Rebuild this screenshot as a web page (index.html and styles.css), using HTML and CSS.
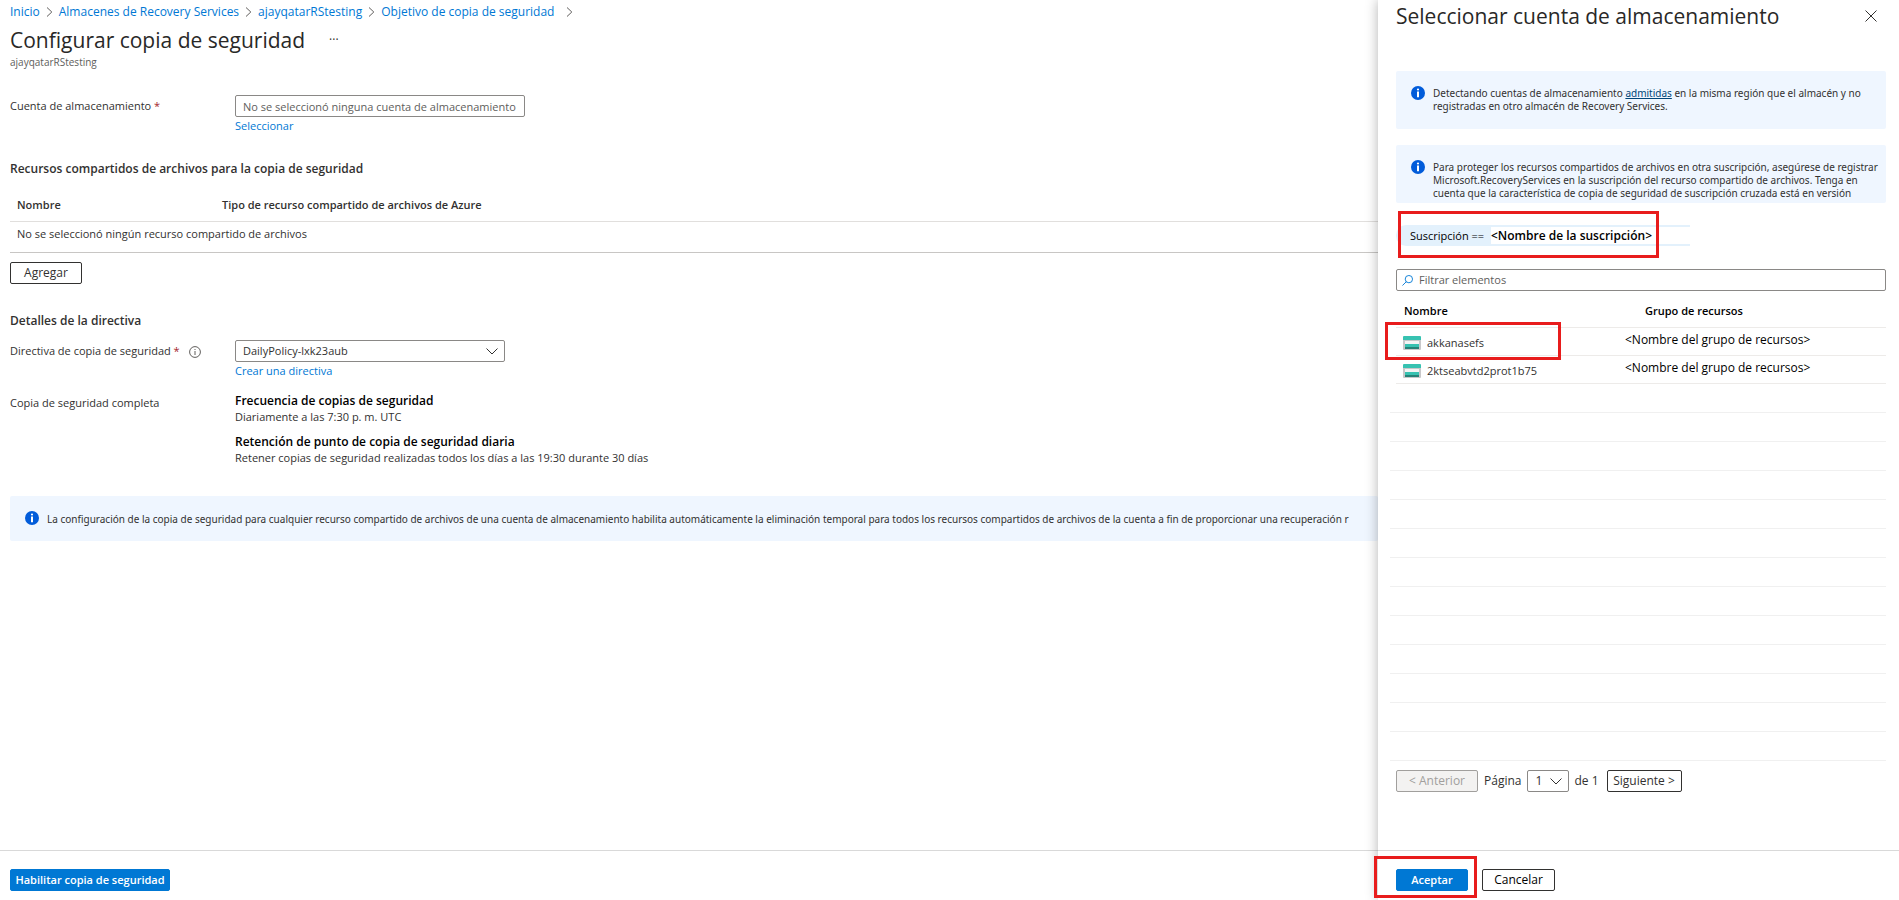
FILE: index.html
```
<!DOCTYPE html>
<html lang="es">
<head>
    <meta charset="UTF-8">
    <meta name="viewport" content="width=device-width, initial-scale=1.0">
    <title>Configurar copia de seguridad</title>
    <link rel="stylesheet" href="styles.css">
</head>
<body>

    <svg class="sprite" aria-hidden="true">
        <symbol id="chevron-right" viewBox="0 0 6 10">
            <path d="M.5.5 5.3 5 .5 9.5" fill="none" stroke="#605e5c"/>
        </symbol>
        <symbol id="chevron-down" viewBox="0 0 12 7">
            <path d="M.5.5 6 6 11.5.5" fill="none" stroke="#323130"/>
        </symbol>
        <symbol id="info" viewBox="0 0 14 14">
            <circle cx="7" cy="7" r="7" fill="#015cda"/>
            <circle cx="7" cy="3.5" r="1.1" fill="#fff"/>
            <path d="M6 5.6h2v5.6H6z" fill="#fff"/>
        </symbol>
        <symbol id="storage" viewBox="0 0 18 14">
            <path d="M0 4h18v9a1 1 0 0 1-1 1H1a1 1 0 0 1-1-1z" fill="#c8c8ca"/>
            <path d="M1 0h16a1 1 0 0 1 1 1v3H0V1a1 1 0 0 1 1-1z" fill="#37c2b1"/>
            <path d="M2 5h14v3H2z" fill="#f4f4f4"/>
            <path d="M2 8h14v3H2z" fill="#37c2b1"/>
            <path d="M2 11h14v2H2z" fill="#258277"/>
        </symbol>
    </svg>

    <div class="page">
        <main class="blade">
            <nav class="breadcrumb">
                <a href="#">Inicio</a>
                <svg class="sep"><use href="#chevron-right"/></svg>
                <a href="#">Almacenes de Recovery Services</a>
                <svg class="sep"><use href="#chevron-right"/></svg>
                <a href="#">ajayqatarRStesting</a>
                <svg class="sep"><use href="#chevron-right"/></svg>
                <a href="#">Objetivo de copia de seguridad</a>
                <svg class="sep last"><use href="#chevron-right"/></svg>
            </nav>

            <header class="title-row">
                <h1>Configurar copia de seguridad</h1>
                <button class="more" aria-label="Más">···</button>
            </header>
            <p class="subtitle">ajayqatarRStesting</p>

            <div class="field account">
                <label for="account">Cuenta de almacenamiento <span class="required">*</span></label>
                <div class="control">
                    <input type="text" id="account" class="box" placeholder="No se seleccionó ninguna cuenta de almacenamiento">
                    <a href="#">Seleccionar</a>
                </div>
            </div>

            <h2 class="shares-title">Recursos compartidos de archivos para la copia de seguridad</h2>
            <table class="shares">
                <thead>
                    <tr><th class="name">Nombre</th><th>Tipo de recurso compartido de archivos de Azure</th></tr>
                </thead>
                <tbody>
                    <tr><td colspan="2">No se seleccionó ningún recurso compartido de archivos</td></tr>
                </tbody>
            </table>
            <button class="btn add">Agregar</button>

            <h2 class="policy-title">Detalles de la directiva</h2>
            <div class="field">
                <label for="policy">Directiva de copia de seguridad <span class="required">*</span>
                    <svg class="hint" viewBox="0 0 12 12">
                        <circle cx="6" cy="6" r="5.4" fill="none" stroke="#605e5c"/>
                        <path d="M6 5v4M6 3v1" stroke="#605e5c"/>
                    </svg>
                </label>
                <div class="control">
                    <div class="select policy">
                        <select id="policy"><option>DailyPolicy-lxk23aub</option></select>
                        <svg class="caret"><use href="#chevron-down"/></svg>
                    </div>
                    <a href="#">Crear una directiva</a>
                </div>
            </div>

            <div class="field full">
                <span class="label">Copia de seguridad completa</span>
                <dl>
                    <dt>Frecuencia de copias de seguridad</dt>
                    <dd>Diariamente a las 7:30 p. m. UTC</dd>
                    <dt>Retención de punto de copia de seguridad diaria</dt>
                    <dd>Retener copias de seguridad realizadas todos los días a las 19:30 durante 30 días</dd>
                </dl>
            </div>

            <div class="notice wide">
                <svg class="info"><use href="#info"/></svg>
                <p>La configuración de la copia de seguridad para cualquier recurso compartido de archivos de una cuenta de almacenamiento habilita automáticamente la eliminación temporal para todos los recursos compartidos de archivos de la cuenta a fin de proporcionar una recuperación r</p>
            </div>

            <footer class="bar">
                <button class="btn primary">Habilitar copia de seguridad</button>
            </footer>
        </main>

        <aside class="panel">
            <header class="panel-head">
                <h2>Seleccionar cuenta de almacenamiento</h2>
                <button class="close" aria-label="Cerrar">
                    <svg viewBox="0 0 12 12"><path d="M.5.5l11 11M11.5.5l-11 11" stroke="#323130"/></svg>
                </button>
            </header>

            <div class="notice">
                <svg class="info"><use href="#info"/></svg>
                <p>Detectando cuentas de almacenamiento <a href="#">admitidas</a> en la misma región que el almacén y no registradas en otro almacén de Recovery Services.</p>
            </div>
            <div class="notice">
                <svg class="info"><use href="#info"/></svg>
                <p>Para proteger los recursos compartidos de archivos en otra suscripción, asegúrese de registrar Microsoft.RecoveryServices en la suscripción del recurso compartido de archivos. Tenga en cuenta que la característica de copia de seguridad de suscripción cruzada está en versión</p>
            </div>

            <div class="pill">
                <span class="key">Suscripción ==</span>
                <b>&lt;Nombre de la suscripción&gt;</b>
                <span class="mark mark-pill"></span>
            </div>

            <div class="search">
                <svg viewBox="0 0 12 12"><circle cx="7.5" cy="4.5" r="4" fill="none" stroke="#0078d4"/><path d="M4.7 7.3.5 11.5" stroke="#0078d4"/></svg>
                <input type="text" aria-label="Filtrar elementos" placeholder="Filtrar elementos">
            </div>

            <table class="accounts">
                <thead>
                    <tr><th>Nombre</th><th class="group">Grupo de recursos</th></tr>
                </thead>
                <tbody>
                    <tr>
                        <td><div class="account-name"><svg class="storage"><use href="#storage"/></svg>akkanasefs<span class="mark mark-row"></span></div></td>
                        <td class="group">&lt;Nombre del grupo de recursos&gt;</td>
                    </tr>
                    <tr>
                        <td><div class="account-name"><svg class="storage"><use href="#storage"/></svg>2ktseabvtd2prot1b75</div></td>
                        <td class="group">&lt;Nombre del grupo de recursos&gt;</td>
                    </tr>
                </tbody>
            </table>
            <div class="empty-rows">
                <div></div><div></div><div></div><div></div><div></div><div></div><div></div>
                <div></div><div></div><div></div><div></div><div></div><div></div>
            </div>

            <div class="pager">
                <button class="btn prev" disabled>&lt; Anterior</button>
                <label for="page">Página</label>
                <div class="select page-select">
                    <select id="page"><option>1</option></select>
                    <svg class="caret"><use href="#chevron-down"/></svg>
                </div>
                <span class="total">de 1</span>
                <button class="btn">Siguiente &gt;</button>
            </div>

            <footer class="bar">
                <div class="accept">
                    <button class="btn primary">Aceptar</button>
                    <span class="mark mark-accept"></span>
                </div>
                <button class="btn cancel">Cancelar</button>
            </footer>
        </aside>
    </div>

</body>
</html>
```
FILE: styles.css
```
* {
    box-sizing: border-box;
}

body {
    margin: 0;
    font-family: "Open Sans", "Noto Sans", sans-serif;
    font-size: 11px;
    line-height: 16px;
    color: #323130;
    background: #fff;
}

h1, h2, p, dl, dd {
    margin: 0;
}

a {
    color: #0078d4;
    text-decoration: none;
}

button, input, select {
    font: inherit;
    color: inherit;
}

.sprite {
    display: none;
}

.page {
    display: flex;
    height: 100vh;
    overflow: hidden;
}

/* Main blade */
.blade {
    flex: 1;
    min-width: 0;
    display: flex;
    flex-direction: column;
    padding-left: 10px;
}

.breadcrumb {
    display: flex;
    align-items: center;
    gap: 6px;
    padding-top: 4px;
    font-size: 12px;
}

.sep {
    width: 7px;
    height: 10px;
}

.sep.last {
    margin-left: 6px;
}

.title-row {
    display: flex;
    align-items: center;
    gap: 24px;
    padding-top: 4px;
}

h1, .panel-head h2 {
    font-size: 21px;
    line-height: 32px;
    font-weight: 500;
    color: #292827;
}

.more {
    border: 0;
    padding: 0;
    background: none;
    font-size: 12px;
}

.subtitle {
    font-size: 10px;
    line-height: 12px;
    color: #605e5c;
}

.field {
    display: flex;
}

.field label, .label {
    flex: none;
    width: 225px;
    line-height: 22px;
}

.field .label {
    line-height: 20px;
}

.required {
    color: #a4262c;
}

.hint {
    width: 12px;
    height: 12px;
    margin-left: 6px;
    vertical-align: -3px;
}

.control {
    display: flex;
    flex-direction: column;
    align-items: flex-start;
}

.control a {
    line-height: 17px;
}

.account {
    margin-top: 27px;
}

.box {
    width: 290px;
    height: 22px;
    padding: 0 7px;
    border: 1px solid #8a8886;
    border-radius: 2px;
}

input::placeholder {
    color: #605e5c;
    opacity: 1;
}

.blade h2 {
    font-size: 12px;
    line-height: 16px;
    font-weight: 600;
}

.blade .shares-title {
    margin: 27px 0 12px;
}

.shares {
    width: 100%;
    border-collapse: collapse;
    text-align: left;
}

.shares th {
    height: 32px;
    padding: 0;
    font-weight: 600;
    border-bottom: 1px solid #e1dfdd;
}

.shares th:first-child, .shares td {
    padding-left: 7px;
}

.shares .name {
    width: 212px;
}

.shares td {
    height: 31px;
    padding-top: 0;
    padding-bottom: 6px;
    border-bottom: 1px solid #c8c6c4;
}

.btn {
    height: 22px;
    padding: 0;
    border: 1px solid #323130;
    border-radius: 2px;
    background: #fff;
    font-size: 12px;
    line-height: 20px;
    white-space: nowrap;
}

.add {
    width: 72px;
    margin-top: 9px;
}

.blade .policy-title {
    margin: 29px 0 11px;
}

.select {
    position: relative;
    height: 22px;
}

.select select {
    width: 100%;
    height: 100%;
    padding: 0 7px;
    border: 1px solid #8a8886;
    border-radius: 2px;
    background: #fff;
    appearance: none;
}

.caret {
    position: absolute;
    top: 8px;
    right: 7px;
    width: 12px;
    height: 7px;
    pointer-events: none;
}

.policy {
    width: 270px;
}

.full {
    margin-top: 14px;
}

dt {
    font-size: 12px;
    font-weight: 600;
    color: #000;
}

dd + dt {
    margin-top: 9px;
}

/* Blue info boxes */
.notice {
    display: flex;
    height: 58px;
    padding: 15px 8px 0 15px;
    overflow: hidden;
    border-radius: 2px;
    background: #eff6ff;
}

.notice p {
    padding-top: 1px;
    font-family: "Noto Sans", "Open Sans", sans-serif;
    font-size: 10px;
    line-height: 13px;
}

.notice a {
    color: #004578;
    text-decoration: underline;
}

.info {
    flex: none;
    width: 14px;
    height: 14px;
    margin-right: 8px;
}

.wide {
    height: 45px;
    margin-top: 30px;
}

.wide p {
    white-space: nowrap;
    line-height: 15px;
}

.bar {
    display: flex;
    align-items: flex-start;
    height: 50px;
    margin-top: auto;
    padding-top: 18px;
    border-top: 1px solid #d9d9d9;
}

.blade .bar {
    margin-left: -10px;
    padding-left: 10px;
}

.primary {
    border-color: #0078d4;
    background: #0078d4;
    color: #fff;
    font-size: 11px;
    font-weight: 600;
}

.blade .primary {
    width: 160px;
}

/* Side panel */
.panel {
    flex: none;
    z-index: 1;
    display: flex;
    flex-direction: column;
    width: 521px;
    padding: 0 13px 0 18px;
    background: #fff;
    box-shadow: 0 0 12px rgba(0, 0, 0, 0.3);
}

.panel-head {
    display: flex;
    align-items: center;
    justify-content: space-between;
    height: 32px;
    margin-bottom: 39px;
    padding-right: 9px;
}

.close {
    display: flex;
    padding: 0;
    border: 0;
    background: none;
}

.close svg {
    width: 12px;
    height: 12px;
}

.panel .notice {
    flex: none;
    margin-bottom: 16px;
}

.pill {
    position: relative;
    display: flex;
    width: 294px;
    height: 21px;
    margin-top: 6px;
    border-radius: 10px 0 0 10px;
    background: #e3f1fc;
    color: #000;
    font-size: 12px;
    line-height: 21px;
}

.pill .key {
    width: 95px;
    padding-left: 14px;
    font-size: 11px;
}

.pill b {
    flex: 1;
    height: 17px;
    margin-top: 2px;
    background: #fff;
    font-weight: 600;
    line-height: 17px;
}

/* Red highlight frames */
.mark {
    position: absolute;
    border: 3px solid #e81c1c;
    pointer-events: none;
}

.mark-pill {
    top: -14px;
    left: 2px;
    width: 261px;
    height: 47px;
}

.mark-row {
    top: -10px;
    left: -11px;
    width: 176px;
    height: 38px;
}

.mark-accept {
    top: -13px;
    left: -22px;
    width: 103px;
    height: 42px;
}

.search {
    display: flex;
    align-items: center;
    height: 22px;
    margin-top: 23px;
    padding: 0 5px;
    border: 1px solid #8a8886;
    border-radius: 2px;
}

.search svg {
    width: 11px;
    height: 11px;
    margin-right: 6px;
}

.search input {
    flex: 1;
    padding: 0;
    border: 0;
    outline: 0;
}

.accounts {
    margin-top: 4px;
    border-collapse: collapse;
    text-align: left;
}

.accounts th {
    height: 32px;
    padding: 0 0 0 8px;
    font-weight: 600;
    color: #000;
}

.accounts tr {
    border-bottom: 1px solid #edebe9;
}

.accounts th.group {
    width: 261px;
    padding-left: 20px;
}

.accounts td {
    height: 28px;
    padding: 0;
}

.accounts td.group {
    padding-bottom: 2px;
    font-size: 12px;
    color: #000;
}

.account-name {
    position: relative;
    display: flex;
    align-items: center;
    padding: 3px 0 0 7px;
}

.storage {
    width: 18px;
    height: 14px;
    margin-right: 6px;
}

.empty-rows {
    margin-left: -6px;
}

.empty-rows div {
    height: 29px;
    border-bottom: 1px solid #f0f0f0;
}

.pager {
    display: flex;
    align-items: center;
    margin-top: 9px;
    font-size: 12px;
}

.prev {
    width: 82px;
    border-color: #a19f9d;
    background: #f3f2f1;
    color: #a19f9d;
}

.pager label {
    margin: 0 6px;
}

.page-select {
    width: 42px;
}

.total {
    margin: 0 8px 0 5px;
}

.total + .btn {
    width: 75px;
}

.panel .bar {
    gap: 14px;
    margin: auto -13px 0 -18px;
    padding-left: 18px;
}

.accept {
    position: relative;
}

.accept .btn {
    display: block;
    width: 72px;
}

.cancel {
    width: 73px;
    color: #000;
}
```
